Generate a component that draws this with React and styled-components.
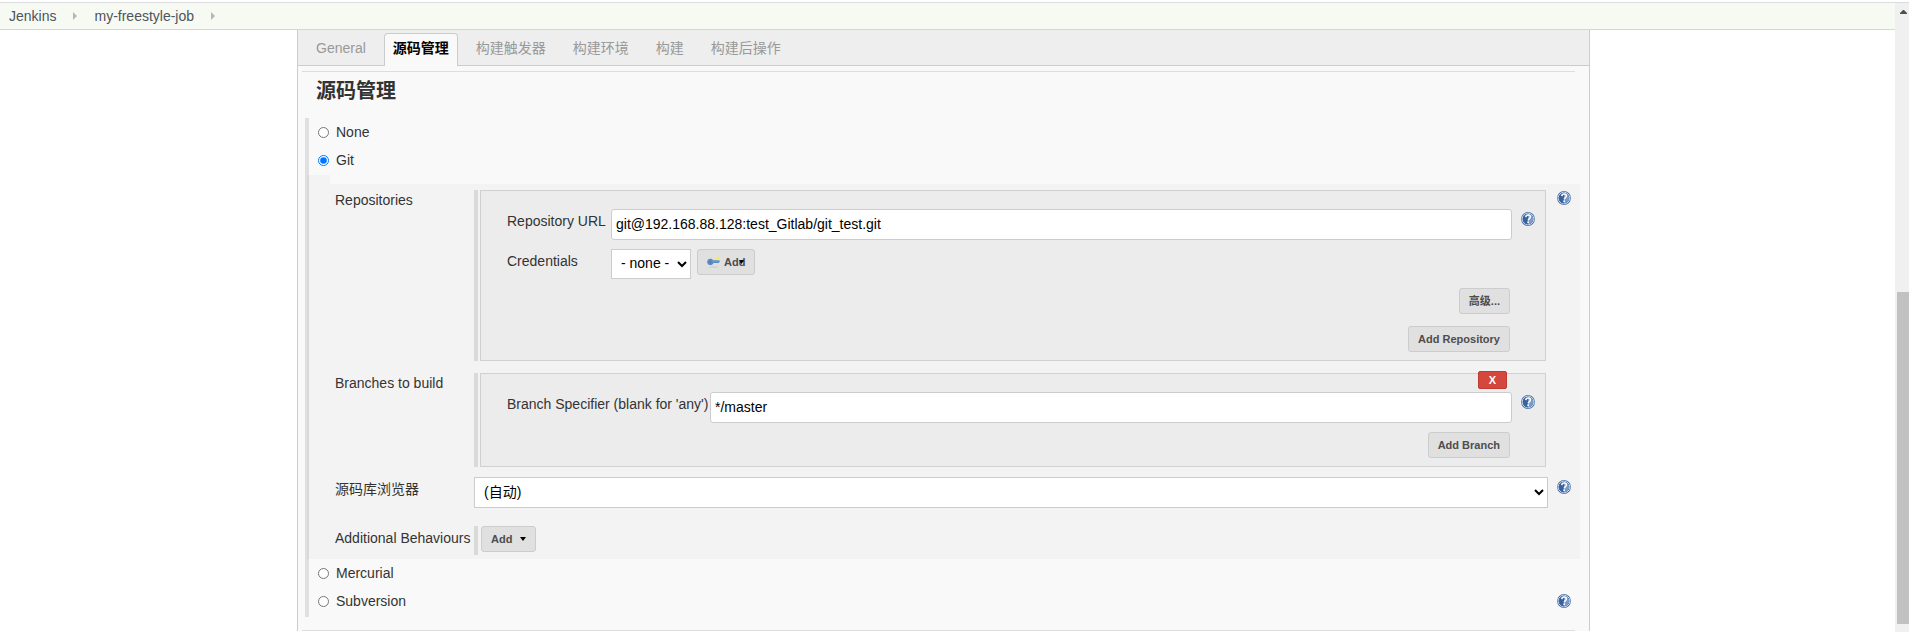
import React from "react";
import styled, { createGlobalStyle } from "styled-components";

const GlobalStyle = createGlobalStyle`
  * { box-sizing: border-box; }
  body { margin: 0; background: #fff; }
  body, button, input, select {
    font-family: "Liberation Sans", "Noto Sans CJK SC", sans-serif;
    font-size: 14px;
    line-height: 20px;
  }
  body { color: #333; }
`;

const Window = styled.div`
  display: flex;
  flex-direction: column;
  height: 100vh;
  padding-top: 2px;
  overflow: hidden;
`;

const Viewport = styled.div`
  display: flex;
  flex: 1;
  min-height: 0;
  border-top: 1px solid #d9dbde;
`;

const Page = styled.div`
  flex: 1;
  min-width: 0;
  overflow: hidden;
`;

const Breadcrumbs = styled.nav`
  display: flex;
  align-items: center;
  gap: 17px;
  height: 27px;
  padding: 0 9px;
  background: #f6faf2;
  border-bottom: 1px solid #d3d9cf;
`;

const Crumb = styled.a`
  color: #4d545d;
  text-decoration: none;
`;

const CrumbArrow = styled.svg`
  width: 4px;
  height: 8px;
  fill: #b4b8b4;
`;

const Panel = styled.main`
  margin: 0 305px 0 297px;
  border: solid #ccc;
  border-width: 0 1px;
  background: #f9f9f9;
`;

const TabBar = styled.nav`
  display: flex;
  align-items: flex-end;
  gap: 9px;
  height: 36px;
  padding-left: 9px;
  background: #eee;
  border-bottom: 1px solid #ccc;
`;

const Tab = styled.a`
  height: 33px;
  margin-bottom: -1px;
  padding: 4px 8px 0;
  border: 1px solid ${(p) => (p.$active ? "#ccc" : "transparent")};
  border-bottom: 0;
  border-radius: 4px 4px 0 0;
  background: ${(p) => (p.$active ? "#f9f9f9" : "transparent")};
  color: ${(p) => (p.$active ? "#000" : "#999")};
  font-weight: ${(p) => (p.$active ? 700 : 400)};
  text-decoration: none;
`;

const Divider = styled.hr`
  height: 1px;
  margin: 0 14px 0 4px;
  border: 0;
  background: #ddd;
`;

const Section = styled.section`
  padding-top: 5px;
`;

const Heading = styled.h2`
  margin: 4px 18px 12px;
  font-size: 20px;
  line-height: 30px;
`;

const Choices = styled.div`
  margin: 0 9px 13px 7px;
  padding-bottom: 2px;
  border-left: 4px solid #e0e0e0;
`;

const Choice = styled.div`
  display: flex;
  justify-content: space-between;
  height: 28px;
  padding: 4px 0 0 9px;
`;

const ChoiceLabel = styled.label`
  display: flex;
  align-items: center;
  gap: 7px;
  height: 20px;
`;

const Radio = styled.input`
  width: 11px;
  height: 11px;
  margin: 0;
`;

const Details = styled.div`
  display: flex;
  margin: 1px 0 0 -2px;
  border-left: 2px solid #d9d9d9;
`;

const Gutter = styled.div`
  width: 21px;
  background: #f3f3f3;
`;

const Settings = styled.div`
  display: flex;
  flex: 1;
  flex-direction: column;
  min-width: 0;
  margin-top: 9px;
  padding: 6px 0 4px 5px;
  background: #f3f3f3;
`;

const Setting = styled.div`
  display: flex;
  align-items: flex-start;
  margin-bottom: ${(p) => p.$space || 0}px;
`;

const SettingLabel = styled.label`
  width: 139px;
  padding-top: ${(p) => (p.$inset ? 2 : 0)}px;
`;

const Repeatable = styled.div`
  flex: 1;
  min-width: 0;
  padding: 0 2px;
  border-left: 4px solid #d9d9d9;
`;

const Box = styled.div`
  position: relative;
  padding: 18px 0 8px 26px;
  border: 1px solid #d0d0d0;
  background: #ececec;
`;

const Field = styled.div`
  display: flex;
  align-items: flex-start;
  margin-bottom: 9px;
`;

const AddMenu = styled.div`
  display: flex;
  padding: 0 1px 3px;
`;

const FieldLabel = styled.label`
  width: ${(p) => (p.$wide ? 203 : 104)}px;
  padding-top: 2px;
`;

const TextInput = styled.input`
  flex: 1;
  min-width: 0;
  height: 31px;
  padding: 0 4px 2px;
  border: 1px solid #ccc;
  border-radius: 3px;
  background: #fff;
  color: #000;
`;

const Select = styled.select`
  flex: ${(p) => (p.$fill ? 1 : "none")};
  height: ${(p) => (p.$fill ? 31 : 30)}px;
  width: ${(p) => (p.$fill ? "auto" : "80px")};
  min-width: 0;
  padding: 0 5px 2px;
  border: 1px solid #ccc;
  border-radius: 0;
  background: #fff;
  color: #000;
`;

const HelpCell = styled.div`
  flex: none;
  width: ${(p) => (p.$inner ? 33 : 32)}px;
  padding: ${(p) => (p.$top ? 1 : 3)}px 0 0 9px;
`;

const HelpButton = styled.button`
  display: block;
  width: 14px;
  height: 14px;
  padding: 0;
  border: 0;
  background: none;
  svg { display: block; width: 14px; height: 14px; }
`;

const Button = styled.button`
  position: relative;
  display: flex;
  align-items: center;
  height: 26px;
  padding: 0 9px;
  border: 1px solid #ccc;
  border-radius: 3px;
  background: #e0e0e0;
  color: #4d4d4d;
  font-size: 11px;
  font-weight: 700;
`;

const CredentialButton = styled(Button)`
  gap: 4px;
  margin-left: 6px;
`;

const Actions = styled.div`
  display: flex;
  flex-direction: column;
  align-items: flex-end;
  gap: 12px;
  padding-right: 35px;
`;

const Caret = styled.svg`
  width: 6px;
  height: 4px;
  margin-left: 8px;
  fill: #000;
`;

const OverlaidCaret = styled(Caret)`
  position: absolute;
  right: 10px;
  top: 10px;
  width: 5px;
`;

const DeleteButton = styled.button`
  position: absolute;
  top: -3px;
  right: 38px;
  width: 29px;
  height: 18px;
  padding: 0;
  border: 1px solid #c03a30;
  border-radius: 2px;
  background: #d3473d;
  color: #fff;
  font-size: 11px;
  font-weight: 700;
  line-height: 16px;
`;

const KeySvg = styled.svg`
  width: 13px;
  height: 12px;
`;

const ScrollTrack = styled.div`
  display: flex;
  flex-direction: column;
  width: 14px;
  padding: 6px 0 8px 2px;
  background: #f0f0f0;
`;

const ScrollArrow = styled.svg`
  width: 7px;
  height: 5px;
  margin-left: 3px;
  fill: #505050;
`;

const ScrollSpace = styled.div`
  flex: 278;
`;

const ScrollThumb = styled.div`
  flex: 332;
  background: #c1c1c1;
`;

function Help({ topic }) {
  return (
    <HelpButton type="button" aria-label={`Help for feature: ${topic}`}>
      <svg viewBox="0 0 14 14">
        <circle cx="7" cy="7" r="6.9" fill="#4b72a8" />
        <circle cx="7" cy="7" r="5.8" fill="none" stroke="#c3d1e5" strokeWidth="1" />
        <circle cx="7" cy="7" r="5.2" fill="#7b9ac6" />
        <path d="M7 1.8A5.2 5.2 0 0 0 7 12.2Z" fill="#38629f" />
        <path
          d="M4.8 5.1C4.9 3.7 5.8 3.1 7.1 3.1S9.4 3.9 9.4 5C9.4 6.5 7.4 6.6 7.2 8.4"
          fill="none"
          stroke="#fff"
          strokeWidth="1.5"
        />
        <rect x="6.3" y="9.4" width="1.7" height="1.7" fill="#fff" />
      </svg>
    </HelpButton>
  );
}

function KeyIcon() {
  return (
    <KeySvg viewBox="0 0 13 12" aria-hidden="true">
      <ellipse cx="6.5" cy="11" rx="5" ry="0.7" fill="#cfcfcf" />
      <path
        d="M3.4 2.8C4.8 2.8 5.8 3.5 6.3 4.3H12.2L12.8 5.6 11.8 6.9H6.5C6 8.1 5 9 3.4 9 1.5 9 .2 7.8.2 5.9S1.5 2.8 3.4 2.8Z"
        fill="#5d8ac0"
      />
      <path d="M4.5 4.7H12.3V5.5H4.5Z" fill="#7ea3d0" />
      <circle cx="3.2" cy="5.9" r="1.4" fill="#4f80ba" />
      <path d="M10.2 0l.8 1.2L12.6 1l-.6 1.4.8 1.4-1.6-.2-1 1-.7-1.3L8 2.8l1.3-1L9 .6l1 .3Z" fill="#f4ec5c" />
    </KeySvg>
  );
}

function Arrow() {
  return (
    <CrumbArrow viewBox="0 0 4 8" aria-hidden="true">
      <path d="M0 0L4 4L0 8Z" />
    </CrumbArrow>
  );
}

const tabs = ["General", "源码管理", "构建触发器", "构建环境", "构建", "构建后操作"];

export default function App() {
  return (
    <>
      <GlobalStyle />
      <Window>
        <Viewport>
          <Page>
            <Breadcrumbs>
              <Crumb href="#jenkins">Jenkins</Crumb>
              <Arrow />
              <Crumb href="#job">my-freestyle-job</Crumb>
              <Arrow />
            </Breadcrumbs>
            <Panel>
              <TabBar>
                {tabs.map((tab, i) => (
                  <Tab key={tab} href={`#tab-${i}`} $active={i === 1}>
                    {tab}
                  </Tab>
                ))}
              </TabBar>
              <Section>
                <Divider />
                <Heading>源码管理</Heading>
                <Choices>
                  <Choice>
                    <ChoiceLabel>
                      <Radio type="radio" name="scm" />
                      None
                    </ChoiceLabel>
                  </Choice>
                  <Choice>
                    <ChoiceLabel>
                      <Radio type="radio" name="scm" defaultChecked />
                      Git
                    </ChoiceLabel>
                  </Choice>
                  <Details>
                    <Gutter />
                    <Settings>
                      <Setting $space={12}>
                        <SettingLabel as="div">Repositories</SettingLabel>
                        <Repeatable>
                          <Box>
                            <Field>
                              <FieldLabel htmlFor="url">Repository URL</FieldLabel>
                              <TextInput id="url" defaultValue="git@192.168.88.128:test_Gitlab/git_test.git" />
                              <HelpCell $inner>
                                <Help topic="Repository URL" />
                              </HelpCell>
                            </Field>
                            <Field>
                              <FieldLabel htmlFor="credentials">Credentials</FieldLabel>
                              <Select id="credentials">
                                <option>- none -</option>
                              </Select>
                              <CredentialButton type="button">
                                <KeyIcon />
                                Add
                                <OverlaidCaret viewBox="0 0 6 4" preserveAspectRatio="none">
                                  <path d="M0 0H6L3 4Z" />
                                </OverlaidCaret>
                              </CredentialButton>
                            </Field>
                            <Actions>
                              <Button type="button">高级...</Button>
                              <Button type="button">Add Repository</Button>
                            </Actions>
                          </Box>
                        </Repeatable>
                        <HelpCell $top>
                          <Help topic="Repositories" />
                        </HelpCell>
                      </Setting>
                      <Setting $space={10}>
                        <SettingLabel as="div">Branches to build</SettingLabel>
                        <Repeatable>
                          <Box>
                            <DeleteButton type="button">X</DeleteButton>
                            <Field>
                              <FieldLabel $wide htmlFor="branch">
                                Branch Specifier (blank for 'any')
                              </FieldLabel>
                              <TextInput id="branch" defaultValue="*/master" />
                              <HelpCell $inner>
                                <Help topic="Branch Specifier" />
                              </HelpCell>
                            </Field>
                            <Actions>
                              <Button type="button">Add Branch</Button>
                            </Actions>
                          </Box>
                        </Repeatable>
                        <HelpCell />
                      </Setting>
                      <Setting $space={18}>
                        <SettingLabel $inset htmlFor="browser">
                          源码库浏览器
                        </SettingLabel>
                        <Select id="browser" $fill>
                          <option>(自动)</option>
                        </Select>
                        <HelpCell>
                          <Help topic="源码库浏览器" />
                        </HelpCell>
                      </Setting>
                      <Setting>
                        <SettingLabel as="div" $inset>
                          Additional Behaviours
                        </SettingLabel>
                        <Repeatable>
                          <AddMenu>
                            <Button type="button">
                              Add
                              <Caret viewBox="0 0 6 4">
                                <path d="M0 0H6L3 4Z" />
                              </Caret>
                            </Button>
                          </AddMenu>
                        </Repeatable>
                      </Setting>
                    </Settings>
                  </Details>
                  <Choice>
                    <ChoiceLabel>
                      <Radio type="radio" name="scm" />
                      Mercurial
                    </ChoiceLabel>
                  </Choice>
                  <Choice>
                    <ChoiceLabel>
                      <Radio type="radio" name="scm" />
                      Subversion
                    </ChoiceLabel>
                    <HelpCell>
                      <Help topic="Subversion" />
                    </HelpCell>
                  </Choice>
                </Choices>
                <Divider />
              </Section>
            </Panel>
          </Page>
          <ScrollTrack aria-hidden="true">
            <ScrollArrow viewBox="0 0 7 5">
              <path d="M3 1H4L7 4V5H0V4Z" />
            </ScrollArrow>
            <ScrollSpace />
            <ScrollThumb />
          </ScrollTrack>
        </Viewport>
      </Window>
    </>
  );
}
